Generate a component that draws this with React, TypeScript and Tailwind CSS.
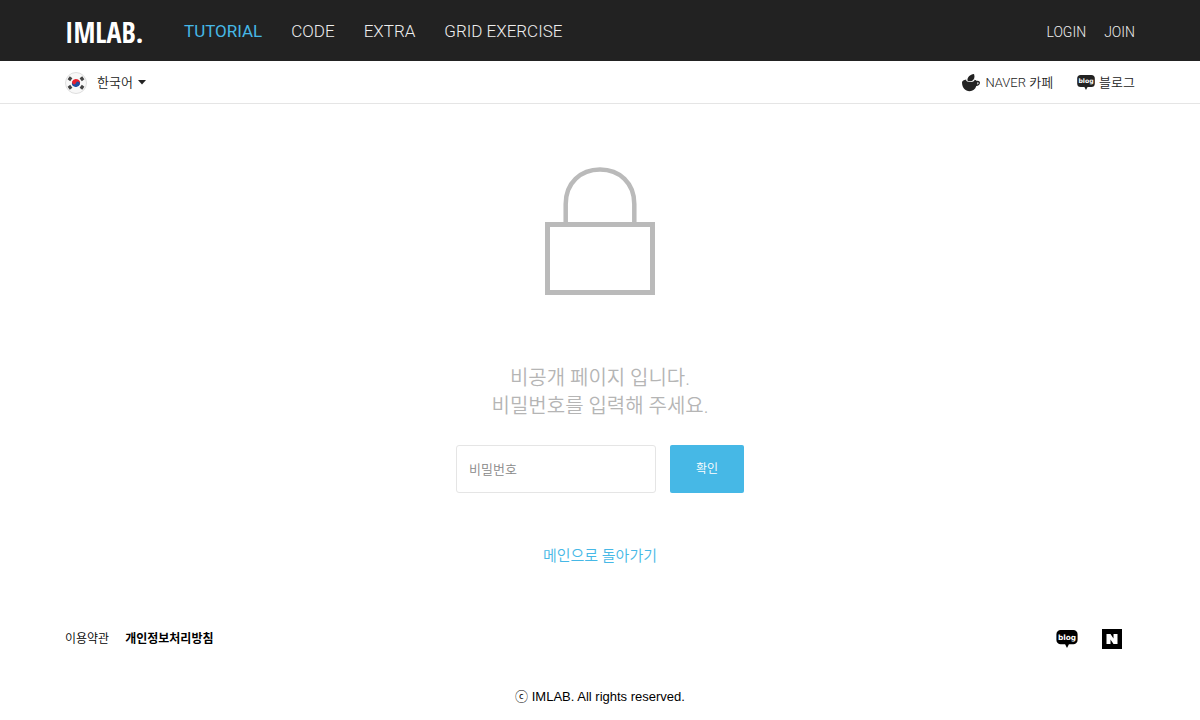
import { useState } from "react"

const NAV_ITEMS = [
  { label: "TUTORIAL", active: true },
  { label: "CODE", active: false },
  { label: "EXTRA", active: false },
  { label: "GRID EXERCISE", active: false },
]

function BlogIcon({ className }: { className?: string }) {
  return (
    <svg viewBox="0 0 20 17" className={className} aria-hidden="true">
      <path
        d="M4 0h12a4 4 0 0 1 4 4v5.500a4 4 0 0 1-4 4h-4.200L10 17l-1.800-3.500H4a4 4 0 0 1-4-4V4a4 4 0 0 1 4-4z"
        fill="currentColor"
      />
      <text x="10" y="9" textAnchor="middle" fontSize="7" fill="#fff" className="font-['DejaVu_Sans',sans-serif] font-bold">
        blog
      </text>
    </svg>
  )
}

function CafeIcon() {
  return (
    <svg viewBox="0 0 18 18" className="h-[18px] w-[18px]" aria-hidden="true">
      <path d="M12 0c1.200 3.200.3 5.900-2.600 7.200-1.600.2-3.200 0-3.900-.8C5 3.300 7.900.6 12 0z" fill="currentColor" />
      <path
        d="M0 8.200c.3-1.300 1.700-2.200 4.200-2.600-.4 1.500 1 2.400 3.500 2.400 2.900 0 4.900-.8 4.900-2.300 1.100.3 1.900.7 2.300 1.200 1.700-.4 3.100.4 3.100 1.900 0 1.900-1.600 3.100-3.700 3.200-1 3.200-3.400 5.200-6.700 5.200C3.200 17.200 0 13.500 0 8.200zM15.400 8.200c0 .8-.1 1.500-.3 2.200.9 0 1.500-.5 1.500-1.300 0-.6-.4-1-1.200-.9z"
        fill="currentColor"
        fillRule="evenodd"
      />
    </svg>
  )
}

function NaverIcon() {
  return (
    <svg viewBox="0 0 20 20" className="h-5 w-5" aria-hidden="true">
      <rect width="20" height="20" fill="#000" />
      <path d="M4.500 5h4l3 4.500V5h4v10h-4l-3-4.500V15h-4z" fill="#fff" />
    </svg>
  )
}

function KoreaFlag() {
  return (
    <svg viewBox="0 0 22 22" className="h-[22px] w-[22px]" aria-hidden="true">
      <circle cx="11" cy="11" r="10.500" fill="#f8f8f8" stroke="#dedede" />
      <g transform="rotate(20 11 11)">
        <path d="M7 11a4 4 0 0 1 8 0z" fill="#e8202e" />
        <path d="M7 11a4 4 0 0 0 8 0z" fill="#1f4fa3" />
        <circle cx="9" cy="11" r="2" fill="#e8202e" />
        <circle cx="13" cy="11" r="2" fill="#1f4fa3" />
      </g>
      <g stroke="#444" strokeWidth="3.200">
        <path d="M3.900 8.300l2.200-3" />
        <path d="M15.900 5.300l2.200 3" />
        <path d="M3.900 13.700l2.200 3" />
        <path d="M15.900 16.700l2.200-3" />
      </g>
    </svg>
  )
}

function LockIcon() {
  return (
    <svg viewBox="0 0 110 128" className="h-32 w-[110px]" fill="none" stroke="#bababa" aria-hidden="true">
      <path d="M20.700 56V37C20.700 16 35.500 2.500 55 2.500S89.300 16 89.300 37v19" strokeWidth="4.500" />
      <rect x="2.500" y="57.500" width="105" height="68" strokeWidth="5" />
    </svg>
  )
}

export default function App() {
  const [password, setPassword] = useState("")

  return (
    <div className="min-h-screen bg-white font-['Roboto','Noto_Sans_CJK_KR',sans-serif] font-[350] text-[#222]">
      <header className="flex h-[61px] items-center bg-[#222] px-[65px] pt-0.5 text-[#eee]">
        <a
          href="#"
          className="w-20 font-['Noto_Sans_ExtraCondensed','Open_Sans_Condensed','Liberation_Sans_Narrow',sans-serif] text-[28px] font-semibold leading-none text-white"
        >
          IMLAB.
        </a>
        <nav className="ml-[39px] flex flex-1 gap-[29px] text-[17px] font-light">
          {NAV_ITEMS.map((item) => (
            <a key={item.label} href="#" className={item.active ? "font-normal text-[#46b8e6]" : ""}>
              {item.label}
            </a>
          ))}
        </nav>
        <div className="flex gap-[18px] text-sm">
          <a href="#">LOGIN</a>
          <a href="#">JOIN</a>
        </div>
      </header>

      <div className="flex h-[43px] items-center justify-between border-b border-[#e5e5e5] px-[65px] pt-px text-[13px]">
        <button type="button" className="flex items-center gap-[10px]">
          <KoreaFlag />
          <span className="flex items-center gap-[5px]">
            한국어
            <svg viewBox="0 0 8 5" className="h-[5px] w-2" aria-hidden="true">
              <path d="M0 0h8L4 4.500z" fill="#222" />
            </svg>
          </span>
        </button>
        <div className="flex gap-6">
          <a href="#" className="flex items-center gap-[5px]">
            <CafeIcon />
            NAVER 카페
          </a>
          <a href="#" className="flex items-center gap-1">
            <BlogIcon className="h-[15px] w-[18px]" />
            블로그
          </a>
        </div>
      </div>

      <main className="flex flex-col items-center pt-[63px]">
        <LockIcon />
        <p className="mt-[69px] text-center text-xl leading-7 text-[#b5b5b5]">
          비공개 페이지 입니다.
          <br />
          비밀번호를 입력해 주세요.
        </p>
        <form className="mt-[25px] flex items-center gap-[14px]" onSubmit={(e) => e.preventDefault()}>
          <input
            type="password"
            aria-label="비밀번호"
            placeholder="비밀번호"
            value={password}
            onChange={(e) => setPassword(e.target.value)}
            className="h-12 w-[200px] rounded-[3px] border border-[#e5e5e5] px-3 text-[13px] placeholder:text-[#888]"
          />
          <button type="submit" className="h-12 w-[74px] rounded-[2px] bg-[#46b8e6] text-xs text-white">
            확인
          </button>
        </form>
        <a href="#" className="mt-[51px] text-[15px] leading-6 text-[#46b8e6]">
          메인으로 돌아가기
        </a>
      </main>

      <footer className="mt-[61px] px-[65px] text-black">
        <div className="flex items-center justify-between">
          <div className="flex gap-4 text-xs">
            <a href="#">이용약관</a>
            <a href="#" className="font-bold">
              개인정보처리방침
            </a>
          </div>
          <div className="flex items-center gap-6 pr-[13px]">
            <a href="#" aria-label="블로그">
              <BlogIcon className="h-[18px] w-[22px]" />
            </a>
            <a href="#" aria-label="NAVER">
              <NaverIcon />
            </a>
          </div>
        </div>
        <p className="mt-[38px] text-center font-['Liberation_Sans','Noto_Sans_CJK_KR',sans-serif] text-[13px] leading-5">
          ⓒ IMLAB. All rights reserved.
        </p>
      </footer>
    </div>
  )
}
